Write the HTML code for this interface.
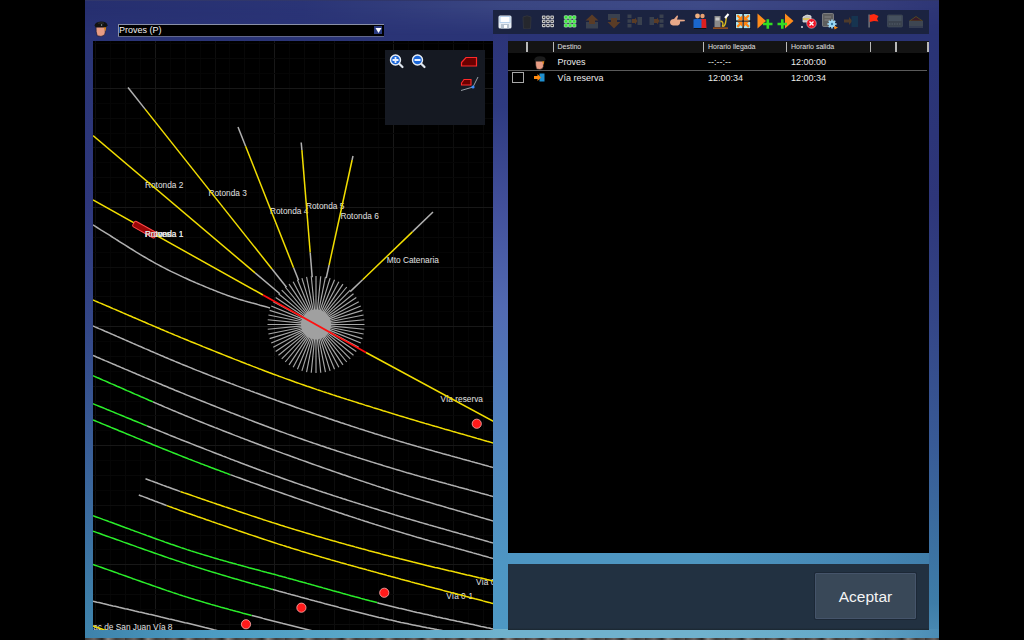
<!DOCTYPE html>
<html><head><meta charset="utf-8"><style>
*{margin:0;padding:0;box-sizing:border-box}
html,body{width:1024px;height:640px;overflow:hidden;background:#000;font-family:"Liberation Sans",sans-serif}
.abs{position:absolute}
#panel{position:absolute;left:85px;top:0;width:854px;height:638px;
background:linear-gradient(to bottom,#373c5f 0px,#2a3276 1px,#2a3576 63px,#2e377c 203px,#334687 323px,#395d97 443px,#3e7fa9 603px,#4084ac 638px)}
#pright{position:absolute;left:929px;top:0;width:10px;height:638px;
background:linear-gradient(to bottom,#373c5f 0px,#2a3276 1px,#2a3476 63px,#2e367a 203px,#344687 323px,#385a96 443px,#3e7da8 603px,#4b8cb4 638px)}
#pmid{position:absolute;left:493px;top:34px;width:15px;height:604px;
background:linear-gradient(to bottom,#2c3478 0px,#2e3a80 73px,#42509b 173px,#526ab2 273px,#507ab9 353px,#5087be 423px,#4e96c3 528px,#4e98c4 595px,#70b2cd 604px)}
#pgap{position:absolute;left:508px;top:552px;width:421px;height:12px;
background:linear-gradient(to right,#4e96c3 0px,#4e96c0 195px,#4484b2 375px,#407eaa 421px)}
#pbot{position:absolute;left:85px;top:629px;width:854px;height:9px;
background:linear-gradient(to right,#3e82aa 0px,#4b9bc3 118px,#5aa8c8 278px,#70b2cd 418px,#70b2cd 618px,#64a8c8 768px,#4b8cb4 854px)}
#ptop{position:absolute;left:85px;top:1px;width:854px;height:40px;
background:linear-gradient(to right,#262f6f 0px,#2a3476 218px,#3a4682 418px,#3e4a87 618px,#343c7a 798px,#2e3676 854px);
-webkit-mask-image:linear-gradient(to bottom,#000 0px,#000 6px,transparent 34px);mask-image:linear-gradient(to bottom,#000 0px,#000 6px,transparent 34px)}
#tex{position:absolute;left:85px;top:637.8px;width:854px;height:3px;background:repeating-linear-gradient(to right,#3a3634 0px,#6a6462 9px,#2a2624 17px,#8a8480 23px,#403c3a 31px,#5a5552 40px)}
.map{position:absolute;left:93px;top:41px}
#dd{position:absolute;left:117.5px;top:24px;width:266.7px;height:12.5px;background:#000;border:1px solid #8a90a8;border-bottom-color:#62688c;border-right:none}
#dd span{position:absolute;left:0.5px;top:0.3px;font-size:9px;line-height:11px;color:#f2f2f2}
#ddb{position:absolute;left:373.5px;top:26px;width:8.5px;height:8px;background:#2a3a80}
#tool{position:absolute;left:493px;top:10px;width:436px;height:24px;background:#1b2340}
#table{position:absolute;left:508px;top:41px;width:421px;height:511.5px;background:#000}
#thead{position:absolute;left:0;top:0;width:421px;height:11.5px;background:#141414}
.sep{position:absolute;top:1px;width:1.6px;height:10px;background:#b8b8b8}
.th{position:absolute;top:0;font-size:7px;line-height:11.5px;color:#e0e0e0}
.td{position:absolute;font-size:9px;line-height:11px;color:#ececec}
#rowsep{position:absolute;left:0;top:29px;width:419px;height:1px;background:#5a5a5a}
#chk{position:absolute;left:4px;top:31px;width:12px;height:10.5px;border:1px solid #a8a8a8}
#bottom{position:absolute;left:508px;top:563.5px;width:421px;height:66px;background:linear-gradient(to bottom,#223141 0,#223141 64px,#1a2630 66px)}
#btn{position:absolute;left:815px;top:573px;width:101px;height:46px;background:#394858;border:1px solid #45546a;color:#f4f4f4;font-size:15.5px;text-align:center;line-height:46px;border-radius:1px;box-shadow:0 0 0 1px #1c2836}
</style></head><body>
<div id="panel"></div><div id="pright"></div><div id="pmid"></div><div id="pgap"></div><div id="pbot"></div><div id="ptop"></div>
<div id="tex"></div>
<svg class="abs" style="left:93px;top:20px" width="16" height="18" viewBox="0 0 16 18"><path d="M3 7 L12.3 7 L12.2 13 Q11.5 16.2 8 16.4 L4.2 15.8 Q2.8 12 3 7Z" fill="#e89c84" stroke="#1a1830" stroke-width="0.7"/><path d="M10.3 7 L13.2 7 L12.6 11.5 Q11.5 9 10.3 7Z" fill="#d8841c"/><path d="M1.6 5.6 Q1.8 1.8 8 1.4 Q14.2 1.4 14.5 5.2 L13.2 7.3 L2.6 7.3 Z" fill="#121212"/><path d="M5 3.2 Q8 2.6 11 3.2" stroke="#4a4a3a" stroke-width="0.6" fill="none"/><circle cx="8.6" cy="5" r="0.7" fill="#9aa"/></svg>
<div id="dd"><span>Proves (P)</span></div>
<div id="ddb"></div>
<svg class="abs" style="left:374px;top:26px" width="9" height="8" viewBox="0 0 9 8"><path d="M1.5 2 L7.5 2 L4.5 7Z" fill="#ffffff"/></svg>
<svg class="map" width="400" height="589" viewBox="93 41 400 589"><rect x="93" y="41" width="400" height="589" fill="#000"/><line x1="95.50" y1="41" x2="95.50" y2="630" stroke="#0d0d0d" stroke-width="1"/><line x1="110.50" y1="41" x2="110.50" y2="630" stroke="#050505" stroke-width="1"/><line x1="125.50" y1="41" x2="125.50" y2="630" stroke="#080808" stroke-width="1"/><line x1="140.50" y1="41" x2="140.50" y2="630" stroke="#050505" stroke-width="1"/><line x1="155.50" y1="41" x2="155.50" y2="630" stroke="#181818" stroke-width="1"/><line x1="170.50" y1="41" x2="170.50" y2="630" stroke="#050505" stroke-width="1"/><line x1="185.50" y1="41" x2="185.50" y2="630" stroke="#080808" stroke-width="1"/><line x1="200.50" y1="41" x2="200.50" y2="630" stroke="#050505" stroke-width="1"/><line x1="215.50" y1="41" x2="215.50" y2="630" stroke="#0d0d0d" stroke-width="1"/><line x1="229.50" y1="41" x2="229.50" y2="630" stroke="#050505" stroke-width="1"/><line x1="244.50" y1="41" x2="244.50" y2="630" stroke="#080808" stroke-width="1"/><line x1="259.50" y1="41" x2="259.50" y2="630" stroke="#050505" stroke-width="1"/><line x1="274.50" y1="41" x2="274.50" y2="630" stroke="#181818" stroke-width="1"/><line x1="289.50" y1="41" x2="289.50" y2="630" stroke="#050505" stroke-width="1"/><line x1="304.50" y1="41" x2="304.50" y2="630" stroke="#080808" stroke-width="1"/><line x1="319.50" y1="41" x2="319.50" y2="630" stroke="#050505" stroke-width="1"/><line x1="334.50" y1="41" x2="334.50" y2="630" stroke="#0d0d0d" stroke-width="1"/><line x1="349.50" y1="41" x2="349.50" y2="630" stroke="#050505" stroke-width="1"/><line x1="363.50" y1="41" x2="363.50" y2="630" stroke="#080808" stroke-width="1"/><line x1="378.50" y1="41" x2="378.50" y2="630" stroke="#050505" stroke-width="1"/><line x1="393.50" y1="41" x2="393.50" y2="630" stroke="#181818" stroke-width="1"/><line x1="408.50" y1="41" x2="408.50" y2="630" stroke="#050505" stroke-width="1"/><line x1="423.50" y1="41" x2="423.50" y2="630" stroke="#080808" stroke-width="1"/><line x1="438.50" y1="41" x2="438.50" y2="630" stroke="#050505" stroke-width="1"/><line x1="453.50" y1="41" x2="453.50" y2="630" stroke="#0d0d0d" stroke-width="1"/><line x1="468.50" y1="41" x2="468.50" y2="630" stroke="#050505" stroke-width="1"/><line x1="483.50" y1="41" x2="483.50" y2="630" stroke="#080808" stroke-width="1"/><line x1="93" y1="43.50" x2="493" y2="43.50" stroke="#050505" stroke-width="1"/><line x1="93" y1="58.50" x2="493" y2="58.50" stroke="#080808" stroke-width="1"/><line x1="93" y1="73.50" x2="493" y2="73.50" stroke="#050505" stroke-width="1"/><line x1="93" y1="88.50" x2="493" y2="88.50" stroke="#181818" stroke-width="1"/><line x1="93" y1="103.50" x2="493" y2="103.50" stroke="#050505" stroke-width="1"/><line x1="93" y1="118.50" x2="493" y2="118.50" stroke="#080808" stroke-width="1"/><line x1="93" y1="133.50" x2="493" y2="133.50" stroke="#050505" stroke-width="1"/><line x1="93" y1="147.50" x2="493" y2="147.50" stroke="#0d0d0d" stroke-width="1"/><line x1="93" y1="162.50" x2="493" y2="162.50" stroke="#050505" stroke-width="1"/><line x1="93" y1="177.50" x2="493" y2="177.50" stroke="#080808" stroke-width="1"/><line x1="93" y1="192.50" x2="493" y2="192.50" stroke="#050505" stroke-width="1"/><line x1="93" y1="207.50" x2="493" y2="207.50" stroke="#181818" stroke-width="1"/><line x1="93" y1="222.50" x2="493" y2="222.50" stroke="#050505" stroke-width="1"/><line x1="93" y1="237.50" x2="493" y2="237.50" stroke="#080808" stroke-width="1"/><line x1="93" y1="252.50" x2="493" y2="252.50" stroke="#050505" stroke-width="1"/><line x1="93" y1="267.50" x2="493" y2="267.50" stroke="#0d0d0d" stroke-width="1"/><line x1="93" y1="281.50" x2="493" y2="281.50" stroke="#050505" stroke-width="1"/><line x1="93" y1="296.50" x2="493" y2="296.50" stroke="#080808" stroke-width="1"/><line x1="93" y1="311.50" x2="493" y2="311.50" stroke="#050505" stroke-width="1"/><line x1="93" y1="326.50" x2="493" y2="326.50" stroke="#181818" stroke-width="1"/><line x1="93" y1="341.50" x2="493" y2="341.50" stroke="#050505" stroke-width="1"/><line x1="93" y1="356.50" x2="493" y2="356.50" stroke="#080808" stroke-width="1"/><line x1="93" y1="371.50" x2="493" y2="371.50" stroke="#050505" stroke-width="1"/><line x1="93" y1="386.50" x2="493" y2="386.50" stroke="#0d0d0d" stroke-width="1"/><line x1="93" y1="401.50" x2="493" y2="401.50" stroke="#050505" stroke-width="1"/><line x1="93" y1="415.50" x2="493" y2="415.50" stroke="#080808" stroke-width="1"/><line x1="93" y1="430.50" x2="493" y2="430.50" stroke="#050505" stroke-width="1"/><line x1="93" y1="445.50" x2="493" y2="445.50" stroke="#181818" stroke-width="1"/><line x1="93" y1="460.50" x2="493" y2="460.50" stroke="#050505" stroke-width="1"/><line x1="93" y1="475.50" x2="493" y2="475.50" stroke="#080808" stroke-width="1"/><line x1="93" y1="490.50" x2="493" y2="490.50" stroke="#050505" stroke-width="1"/><line x1="93" y1="505.50" x2="493" y2="505.50" stroke="#0d0d0d" stroke-width="1"/><line x1="93" y1="520.50" x2="493" y2="520.50" stroke="#050505" stroke-width="1"/><line x1="93" y1="535.50" x2="493" y2="535.50" stroke="#080808" stroke-width="1"/><line x1="93" y1="549.50" x2="493" y2="549.50" stroke="#050505" stroke-width="1"/><line x1="93" y1="564.50" x2="493" y2="564.50" stroke="#181818" stroke-width="1"/><line x1="93" y1="579.50" x2="493" y2="579.50" stroke="#050505" stroke-width="1"/><line x1="93" y1="594.50" x2="493" y2="594.50" stroke="#080808" stroke-width="1"/><line x1="93" y1="609.50" x2="493" y2="609.50" stroke="#050505" stroke-width="1"/><line x1="93" y1="624.50" x2="493" y2="624.50" stroke="#0d0d0d" stroke-width="1"/><g font-family="Liberation Sans, sans-serif" font-size="8.3" fill="#e2e2e2"><text x="145" y="187.5">Rotonda 2</text><text x="208.5" y="196.0">Rotonda 3</text><text x="270" y="213.5">Rotonda 4</text><text x="306" y="208.5">Rotonda 5</text><text x="340.5" y="219.0">Rotonda 6</text><text x="386.75" y="263.0">Mto Catenaria</text><text x="145" y="236.5">Rotonda 1</text><text x="145" y="236.5">Proves</text><text x="440.5" y="401.8">Vía reserva</text><text x="476" y="585.4">Vía 0</text><text x="446.3" y="598.6">Vía 0-1</text><text x="172.5" y="629.7" text-anchor="end">Trac de San Juan Vía 8</text></g><line x1="128.0" y1="87.5" x2="145.1" y2="109.1" stroke="#b0b0b0" stroke-width="1.5"/><line x1="145.1" y1="109.1" x2="272.0" y2="269.0" stroke="#f2de00" stroke-width="1.5"/><line x1="272.0" y1="269.0" x2="286.5" y2="287.3" stroke="#b0b0b0" stroke-width="1.5"/><line x1="93.0" y1="135.5" x2="255.1" y2="272.9" stroke="#f2de00" stroke-width="1.5"/><line x1="255.1" y1="272.9" x2="279.8" y2="293.8" stroke="#b0b0b0" stroke-width="1.5"/><line x1="238.0" y1="127.0" x2="245.6" y2="146.2" stroke="#b0b0b0" stroke-width="1.5"/><line x1="245.6" y1="146.2" x2="293.6" y2="267.7" stroke="#f2de00" stroke-width="1.5"/><line x1="293.6" y1="267.7" x2="298.6" y2="280.3" stroke="#b0b0b0" stroke-width="1.5"/><line x1="301.2" y1="142.5" x2="301.9" y2="150.1" stroke="#b0b0b0" stroke-width="1.5"/><line x1="301.9" y1="150.1" x2="310.2" y2="252.5" stroke="#f2de00" stroke-width="1.5"/><line x1="310.2" y1="252.5" x2="312.2" y2="277.2" stroke="#b0b0b0" stroke-width="1.5"/><line x1="353.0" y1="156.0" x2="352.1" y2="160.0" stroke="#b0b0b0" stroke-width="1.5"/><line x1="352.1" y1="160.0" x2="329.1" y2="265.0" stroke="#f2de00" stroke-width="1.5"/><line x1="329.1" y1="265.0" x2="326.2" y2="278.1" stroke="#b0b0b0" stroke-width="1.5"/><line x1="433.0" y1="212.0" x2="412.4" y2="231.9" stroke="#b0b0b0" stroke-width="1.5"/><line x1="412.4" y1="231.9" x2="362.6" y2="279.7" stroke="#f2de00" stroke-width="1.5"/><line x1="362.6" y1="279.7" x2="350.2" y2="291.6" stroke="#b0b0b0" stroke-width="1.5"/><line x1="93" y1="200" x2="263" y2="295" stroke="#f2de00" stroke-width="1.5"/><line x1="366" y1="352.5" x2="495" y2="422.3" stroke="#f2de00" stroke-width="1.5"/><polyline points="93.0,225.0 95.0,226.2 97.1,227.5 99.2,228.8 101.2,230.1 103.3,231.3 105.3,232.6 107.4,233.9 109.5,235.2 111.5,236.5 113.6,237.8 115.7,239.2 117.8,240.5 119.8,241.8 121.9,243.1 124.0,244.4 126.0,245.7 128.1,247.0 130.2,248.3 132.2,249.5 134.3,250.8 136.3,252.1 138.4,253.3 140.4,254.6 142.5,255.8 144.5,257.0 146.5,258.2 148.5,259.4 150.5,260.5 152.6,261.7 154.6,262.8 156.5,263.9 158.5,264.9 160.5,266.0 162.6,267.1 164.7,268.2 166.8,269.3 168.9,270.3 171.0,271.4 173.1,272.4 175.3,273.4 177.4,274.4 179.5,275.4 181.6,276.4 183.7,277.4 185.8,278.3 187.9,279.3 189.9,280.2 192.0,281.1 194.1,282.0 196.1,282.9 198.1,283.7 200.2,284.6 202.2,285.4 204.2,286.3 206.1,287.1 208.1,287.9 210.0,288.7 212.0,289.4 213.9,290.2 215.7,290.9 217.6,291.7 219.4,292.4 221.2,293.1 223.0,293.8 225.4,294.6 227.6,295.5 229.9,296.3 232.1,297.0 234.2,297.7 236.4,298.4 238.4,299.1 240.5,299.7 242.5,300.3 244.5,300.9 246.5,301.4 248.4,302.0 250.4,302.5 252.3,303.1 254.3,303.6 256.2,304.1 258.1,304.6 260.1,305.2 262.0,305.7 264.0,306.2 266.0,306.8 268.0,307.4 270.0,308.0" fill="none" stroke="#b0b0b0" stroke-width="1.5"/><g stroke="#a8a8a8" stroke-width="1.15"><line x1="330.00" y1="324.50" x2="364.50" y2="324.50"/><line x1="329.93" y1="325.87" x2="364.27" y2="329.25"/><line x1="329.73" y1="327.23" x2="363.57" y2="333.96"/><line x1="329.40" y1="328.56" x2="362.41" y2="338.58"/><line x1="328.93" y1="329.86" x2="360.81" y2="343.06"/><line x1="328.35" y1="331.10" x2="358.77" y2="347.36"/><line x1="327.64" y1="332.28" x2="356.33" y2="351.45"/><line x1="326.82" y1="333.38" x2="353.49" y2="355.27"/><line x1="325.90" y1="334.40" x2="350.29" y2="358.79"/><line x1="324.88" y1="335.32" x2="346.77" y2="361.99"/><line x1="323.78" y1="336.14" x2="342.95" y2="364.83"/><line x1="322.60" y1="336.85" x2="338.86" y2="367.27"/><line x1="321.36" y1="337.43" x2="334.56" y2="369.31"/><line x1="320.06" y1="337.90" x2="330.08" y2="370.91"/><line x1="318.73" y1="338.23" x2="325.46" y2="372.07"/><line x1="317.37" y1="338.43" x2="320.75" y2="372.77"/><line x1="316.00" y1="338.50" x2="316.00" y2="373.00"/><line x1="314.63" y1="338.43" x2="311.25" y2="372.77"/><line x1="313.27" y1="338.23" x2="306.54" y2="372.07"/><line x1="311.94" y1="337.90" x2="301.92" y2="370.91"/><line x1="310.64" y1="337.43" x2="297.44" y2="369.31"/><line x1="309.40" y1="336.85" x2="293.14" y2="367.27"/><line x1="308.22" y1="336.14" x2="289.05" y2="364.83"/><line x1="307.12" y1="335.32" x2="285.23" y2="361.99"/><line x1="306.10" y1="334.40" x2="281.71" y2="358.79"/><line x1="305.18" y1="333.38" x2="278.51" y2="355.27"/><line x1="304.36" y1="332.28" x2="275.67" y2="351.45"/><line x1="303.65" y1="331.10" x2="273.23" y2="347.36"/><line x1="303.07" y1="329.86" x2="271.19" y2="343.06"/><line x1="302.60" y1="328.56" x2="269.59" y2="338.58"/><line x1="302.27" y1="327.23" x2="268.43" y2="333.96"/><line x1="302.07" y1="325.87" x2="267.73" y2="329.25"/><line x1="302.00" y1="324.50" x2="267.50" y2="324.50"/><line x1="302.07" y1="323.13" x2="267.73" y2="319.75"/><line x1="302.27" y1="321.77" x2="268.43" y2="315.04"/><line x1="302.60" y1="320.44" x2="269.59" y2="310.42"/><line x1="303.07" y1="319.14" x2="271.19" y2="305.94"/><line x1="303.65" y1="317.90" x2="273.23" y2="301.64"/><line x1="304.36" y1="316.72" x2="275.67" y2="297.55"/><line x1="305.18" y1="315.62" x2="278.51" y2="293.73"/><line x1="306.10" y1="314.60" x2="281.71" y2="290.21"/><line x1="307.12" y1="313.68" x2="285.23" y2="287.01"/><line x1="308.22" y1="312.86" x2="289.05" y2="284.17"/><line x1="309.40" y1="312.15" x2="293.14" y2="281.73"/><line x1="310.64" y1="311.57" x2="297.44" y2="279.69"/><line x1="311.94" y1="311.10" x2="301.92" y2="278.09"/><line x1="313.27" y1="310.77" x2="306.54" y2="276.93"/><line x1="314.63" y1="310.57" x2="311.25" y2="276.23"/><line x1="316.00" y1="310.50" x2="316.00" y2="276.00"/><line x1="317.37" y1="310.57" x2="320.75" y2="276.23"/><line x1="318.73" y1="310.77" x2="325.46" y2="276.93"/><line x1="320.06" y1="311.10" x2="330.08" y2="278.09"/><line x1="321.36" y1="311.57" x2="334.56" y2="279.69"/><line x1="322.60" y1="312.15" x2="338.86" y2="281.73"/><line x1="323.78" y1="312.86" x2="342.95" y2="284.17"/><line x1="324.88" y1="313.68" x2="346.77" y2="287.01"/><line x1="325.90" y1="314.60" x2="350.29" y2="290.21"/><line x1="326.82" y1="315.62" x2="353.49" y2="293.73"/><line x1="327.64" y1="316.72" x2="356.33" y2="297.55"/><line x1="328.35" y1="317.90" x2="358.77" y2="301.64"/><line x1="328.93" y1="319.14" x2="360.81" y2="305.94"/><line x1="329.40" y1="320.44" x2="362.41" y2="310.42"/><line x1="329.73" y1="321.77" x2="363.57" y2="315.04"/><line x1="329.93" y1="323.13" x2="364.27" y2="319.75"/></g><circle cx="316.0" cy="324.5" r="15" fill="#a0a0a0"/><line x1="263" y1="295" x2="366" y2="352.5" stroke="#ff1010" stroke-width="2"/><polyline points="93.0,300.0 95.0,300.9 97.0,301.7 99.0,302.6 101.0,303.4 103.0,304.3 105.0,305.1 107.0,306.0 109.0,306.8 111.0,307.7 113.0,308.6 115.0,309.4 117.0,310.3 119.0,311.1 121.0,312.0 123.0,312.9 125.0,313.7 127.0,314.6 129.0,315.5 131.0,316.3 133.0,317.2 135.0,318.0 137.0,318.9 139.0,319.8 141.0,320.6 143.0,321.5 145.0,322.3 147.0,323.2 149.0,324.1 151.0,324.9 153.0,325.8 155.0,326.6 157.0,327.5 159.0,328.3 161.0,329.2 163.0,330.0 165.0,330.9 167.0,331.7 169.0,332.6 171.0,333.4 173.0,334.2 175.0,335.1 177.0,335.9 179.0,336.7 181.0,337.6 183.0,338.4 185.0,339.2 187.0,340.0 189.0,340.9 191.0,341.7 193.0,342.5 195.0,343.3 197.0,344.1 199.0,344.9 201.0,345.7 203.0,346.6 205.0,347.4 207.0,348.2 209.0,349.0 211.0,349.8 213.0,350.6 215.0,351.4 217.0,352.2 219.0,353.0 221.0,353.8 223.0,354.6 225.0,355.4 227.0,356.2 229.0,357.0 231.0,357.8 233.0,358.6 235.0,359.4 237.0,360.1 239.0,360.9 241.0,361.7 243.0,362.5 245.0,363.3 247.0,364.1 249.0,364.8 251.0,365.6 253.0,366.4 255.0,367.1 257.0,367.9 259.0,368.7 261.0,369.4 263.0,370.2 265.0,371.0 267.0,371.7 269.0,372.5 271.0,373.2 273.0,374.0 275.0,374.7 277.0,375.4 279.0,376.2 281.0,376.9 283.0,377.6 285.0,378.4 287.0,379.1 289.0,379.8 291.0,380.5 293.0,381.2 295.0,382.0 297.0,382.7 299.0,383.4 301.0,384.1 303.0,384.8 305.0,385.5 307.0,386.2 309.0,386.8 311.0,387.5 313.0,388.2 315.0,388.9 317.0,389.6 319.0,390.2 321.0,390.9 323.0,391.6 325.0,392.2 327.0,392.9 329.0,393.5 331.0,394.2 333.0,394.9 335.0,395.5 337.0,396.2 339.0,396.8 341.0,397.5 343.0,398.1 345.0,398.7 347.0,399.4 349.0,400.0 351.0,400.6 353.0,401.3 355.0,401.9 357.0,402.5 359.0,403.2 361.0,403.8 363.0,404.4 365.0,405.1 367.0,405.7 369.0,406.3 371.0,406.9 373.0,407.6 375.0,408.2 377.0,408.8 379.0,409.4 381.0,410.0 383.0,410.7 385.0,411.3 387.0,411.9 389.0,412.5 391.0,413.1 393.0,413.8 395.0,414.4 397.0,415.0 399.0,415.6 401.0,416.2 403.0,416.8 405.0,417.4 407.0,418.0 409.0,418.6 411.0,419.2 413.0,419.8 415.0,420.4 417.0,421.0 419.0,421.6 421.0,422.2 423.0,422.8 425.0,423.4 427.0,423.9 429.0,424.5 431.0,425.1 433.0,425.7 435.0,426.3 437.0,426.8 439.0,427.4 441.0,428.0 443.0,428.6 445.0,429.2 447.0,429.7 449.0,430.3 451.0,430.9 453.0,431.5 455.0,432.0 457.0,432.6 459.0,433.2 461.0,433.8 463.0,434.3 465.0,434.9 467.0,435.5 469.0,436.1 471.0,436.6 473.0,437.2 475.0,437.8 477.0,438.4 479.0,438.9 481.0,439.5 483.0,440.1 485.0,440.7 487.0,441.3 489.0,441.8 491.0,442.4 493.0,443.0" fill="none" stroke="#f2de00" stroke-width="1.5"/><polyline points="93.0,326.0 95.0,326.9 97.0,327.7 99.0,328.6 101.0,329.4 103.0,330.3 105.0,331.2 107.0,332.0 109.0,332.9 111.0,333.8 113.0,334.6 115.0,335.5 117.0,336.4 119.0,337.2 121.0,338.1 123.0,339.0 125.0,339.9 127.0,340.7 129.0,341.6 131.0,342.5 133.0,343.4 135.0,344.2 137.0,345.1 139.0,346.0 141.0,346.8 143.0,347.7 145.0,348.6 147.0,349.4 149.0,350.3 151.0,351.2 153.0,352.0 155.0,352.9 157.0,353.7 159.0,354.6 161.0,355.5 163.0,356.3 165.0,357.2 167.0,358.0 169.0,358.9 171.0,359.7 173.0,360.5 175.0,361.4 177.0,362.2 179.0,363.0 181.0,363.9 183.0,364.7 185.0,365.5 187.0,366.3 189.0,367.1 191.0,367.9 193.0,368.8 195.0,369.6 197.0,370.4 199.0,371.1 201.0,371.9 203.0,372.7 205.0,373.5 207.0,374.3 209.0,375.1 211.0,375.9 213.0,376.7 215.0,377.4 217.0,378.2 219.0,379.0 221.0,379.8 223.0,380.5 225.0,381.3 227.0,382.1 229.0,382.8 231.0,383.6 233.0,384.3 235.0,385.1 237.0,385.9 239.0,386.6 241.0,387.4 243.0,388.1 245.0,388.9 247.0,389.6 249.0,390.3 251.0,391.1 253.0,391.8 255.0,392.6 257.0,393.3 259.0,394.0 261.0,394.8 263.0,395.5 265.0,396.2 267.0,397.0 269.0,397.7 271.0,398.4 273.0,399.1 275.0,399.8 277.0,400.6 279.0,401.3 281.0,402.0 283.0,402.7 285.0,403.4 287.0,404.1 289.0,404.8 291.0,405.5 293.0,406.2 295.0,407.0 297.0,407.7 299.0,408.4 301.0,409.1 303.0,409.8 305.0,410.4 307.0,411.1 309.0,411.8 311.0,412.5 313.0,413.2 315.0,413.9 317.0,414.6 319.0,415.3 321.0,416.0 323.0,416.6 325.0,417.3 327.0,418.0 329.0,418.7 331.0,419.3 333.0,420.0 335.0,420.7 337.0,421.3 339.0,422.0 341.0,422.7 343.0,423.3 345.0,424.0 347.0,424.6 349.0,425.3 351.0,426.0 353.0,426.6 355.0,427.3 357.0,427.9 359.0,428.6 361.0,429.2 363.0,429.8 365.0,430.5 367.0,431.1 369.0,431.8 371.0,432.4 373.0,433.0 375.0,433.7 377.0,434.3 379.0,434.9 381.0,435.5 383.0,436.2 385.0,436.8 387.0,437.4 389.0,438.0 391.0,438.6 393.0,439.2 395.0,439.9 397.0,440.5 399.0,441.1 401.0,441.7 403.0,442.3 405.0,442.9 407.0,443.5 409.0,444.0 411.0,444.6 413.0,445.2 415.0,445.8 417.0,446.4 419.0,446.9 421.0,447.5 423.0,448.1 425.0,448.6 427.0,449.2 429.0,449.8 431.0,450.3 433.0,450.9 435.0,451.5 437.0,452.0 439.0,452.6 441.0,453.1 443.0,453.7 445.0,454.2 447.0,454.8 449.0,455.3 451.0,455.9 453.0,456.4 455.0,457.0 457.0,457.5 459.0,458.1 461.0,458.6 463.0,459.2 465.0,459.7 467.0,460.3 469.0,460.8 471.0,461.4 473.0,461.9 475.0,462.5 477.0,463.0 479.0,463.6 481.0,464.1 483.0,464.7 485.0,465.3 487.0,465.8 489.0,466.4 491.0,466.9 493.0,467.5" fill="none" stroke="#b0b0b0" stroke-width="1.5"/><polyline points="93.0,355.5 95.0,356.3 97.0,357.2 99.0,358.0 101.0,358.9 103.0,359.7 105.0,360.6 107.0,361.4 109.0,362.3 111.0,363.1 113.0,364.0 115.0,364.8 117.0,365.7 119.0,366.5 121.0,367.4 123.0,368.2 125.0,369.1 127.0,369.9 129.0,370.8 131.0,371.6 133.0,372.5 135.0,373.3 137.0,374.2 139.0,375.0 141.0,375.9 143.0,376.7 145.0,377.6 147.0,378.4 149.0,379.3 151.0,380.1 153.0,381.0 155.0,381.8 157.0,382.6 159.0,383.5 161.0,384.3 163.0,385.2 165.0,386.0 167.0,386.8 169.0,387.7 171.0,388.5 173.0,389.3 175.0,390.2 177.0,391.0 179.0,391.8 181.0,392.6 183.0,393.4 185.0,394.3 187.0,395.1 189.0,395.9 191.0,396.7 193.0,397.5 195.0,398.3 197.0,399.1 199.0,399.9 201.0,400.7 203.0,401.5 205.0,402.3 207.0,403.1 209.0,403.9 211.0,404.7 213.0,405.5 215.0,406.3 217.0,407.1 219.0,407.9 221.0,408.7 223.0,409.5 225.0,410.3 227.0,411.1 229.0,411.9 231.0,412.7 233.0,413.4 235.0,414.2 237.0,415.0 239.0,415.8 241.0,416.6 243.0,417.3 245.0,418.1 247.0,418.9 249.0,419.7 251.0,420.4 253.0,421.2 255.0,422.0 257.0,422.7 259.0,423.5 261.0,424.2 263.0,425.0 265.0,425.8 267.0,426.5 269.0,427.3 271.0,428.0 273.0,428.7 275.0,429.5 277.0,430.2 279.0,431.0 281.0,431.7 283.0,432.4 285.0,433.1 287.0,433.9 289.0,434.6 291.0,435.3 293.0,436.0 295.0,436.7 297.0,437.4 299.0,438.1 301.0,438.8 303.0,439.5 305.0,440.2 307.0,440.9 309.0,441.6 311.0,442.3 313.0,443.0 315.0,443.6 317.0,444.3 319.0,445.0 321.0,445.7 323.0,446.3 325.0,447.0 327.0,447.7 329.0,448.3 331.0,449.0 333.0,449.6 335.0,450.3 337.0,451.0 339.0,451.6 341.0,452.3 343.0,452.9 345.0,453.6 347.0,454.2 349.0,454.8 351.0,455.5 353.0,456.1 355.0,456.7 357.0,457.4 359.0,458.0 361.0,458.6 363.0,459.3 365.0,459.9 367.0,460.5 369.0,461.1 371.0,461.8 373.0,462.4 375.0,463.0 377.0,463.6 379.0,464.2 381.0,464.8 383.0,465.5 385.0,466.1 387.0,466.7 389.0,467.3 391.0,467.9 393.0,468.5 395.0,469.1 397.0,469.7 399.0,470.3 401.0,470.9 403.0,471.5 405.0,472.1 407.0,472.7 409.0,473.2 411.0,473.8 413.0,474.4 415.0,475.0 417.0,475.5 419.0,476.1 421.0,476.7 423.0,477.2 425.0,477.8 427.0,478.4 429.0,478.9 431.0,479.5 433.0,480.0 435.0,480.6 437.0,481.1 439.0,481.7 441.0,482.2 443.0,482.8 445.0,483.3 447.0,483.9 449.0,484.4 451.0,485.0 453.0,485.5 455.0,486.1 457.0,486.6 459.0,487.2 461.0,487.7 463.0,488.2 465.0,488.8 467.0,489.3 469.0,489.9 471.0,490.4 473.0,491.0 475.0,491.5 477.0,492.1 479.0,492.6 481.0,493.2 483.0,493.7 485.0,494.3 487.0,494.8 489.0,495.4 491.0,495.9 493.0,496.5" fill="none" stroke="#b0b0b0" stroke-width="1.5"/><polyline points="93.0,375.8 95.0,376.6 97.0,377.5 99.0,378.3 101.0,379.2 103.0,380.1 105.0,380.9 107.0,381.8 109.0,382.7 111.0,383.6 113.0,384.4 115.0,385.3 117.0,386.2 119.0,387.0 121.0,387.9 123.0,388.8 125.0,389.7 127.0,390.6 129.0,391.4 131.0,392.3 133.0,393.2 135.0,394.1 137.0,394.9 139.0,395.8 141.0,396.7 143.0,397.5 145.0,398.4 147.0,399.3 149.0,400.2 151.0,401.0 153.0,401.9" fill="none" stroke="#2aee2a" stroke-width="1.5"/><polyline points="153.0,401.9 155.0,402.8 157.0,403.6 159.0,404.5 161.0,405.3 163.0,406.2 165.0,407.1 167.0,407.9 169.0,408.8 171.0,409.6 173.0,410.5 175.0,411.3 177.0,412.1 179.0,413.0 181.0,413.8 183.0,414.6 185.0,415.5 187.0,416.3 189.0,417.1 191.0,417.9 193.0,418.8 195.0,419.6 197.0,420.4 199.0,421.2 201.0,422.0 203.0,422.8 205.0,423.6 207.0,424.4 209.0,425.2 211.0,426.0 213.0,426.8 215.0,427.6 217.0,428.3 219.0,429.1 221.0,429.9 223.0,430.7 225.0,431.5 227.0,432.3 229.0,433.0 231.0,433.8 233.0,434.6 235.0,435.4 237.0,436.1 239.0,436.9 241.0,437.7 243.0,438.4 245.0,439.2 247.0,439.9 249.0,440.7 251.0,441.5 253.0,442.2 255.0,443.0 257.0,443.7 259.0,444.5 261.0,445.2 263.0,446.0 265.0,446.7 267.0,447.5 269.0,448.2 271.0,448.9 273.0,449.7 275.0,450.4 277.0,451.2 279.0,451.9 281.0,452.6 283.0,453.4 285.0,454.1 287.0,454.8 289.0,455.5 291.0,456.3 293.0,457.0 295.0,457.7 297.0,458.4 299.0,459.2 301.0,459.9 303.0,460.6 305.0,461.3 307.0,462.0 309.0,462.8 311.0,463.5 313.0,464.2 315.0,464.9 317.0,465.6 319.0,466.3 321.0,467.0 323.0,467.7 325.0,468.4 327.0,469.1 329.0,469.8 331.0,470.5 333.0,471.2 335.0,471.9 337.0,472.6 339.0,473.3 341.0,474.0 343.0,474.7 345.0,475.3 347.0,476.0 349.0,476.7 351.0,477.4 353.0,478.1 355.0,478.7 357.0,479.4 359.0,480.1 361.0,480.8 363.0,481.4 365.0,482.1 367.0,482.8 369.0,483.4 371.0,484.1 373.0,484.8 375.0,485.4 377.0,486.1 379.0,486.7 381.0,487.4 383.0,488.0 385.0,488.7 387.0,489.3 389.0,490.0 391.0,490.6 393.0,491.2 395.0,491.9 397.0,492.5 399.0,493.2 401.0,493.8 403.0,494.4 405.0,495.0 407.0,495.6 409.0,496.3 411.0,496.9 413.0,497.5 415.0,498.1 417.0,498.7 419.0,499.3 421.0,499.9 423.0,500.5 425.0,501.1 427.0,501.7 429.0,502.3 431.0,502.9 433.0,503.5 435.0,504.1 437.0,504.7 439.0,505.2 441.0,505.8 443.0,506.4 445.0,507.0 447.0,507.6 449.0,508.2 451.0,508.7 453.0,509.3 455.0,509.9 457.0,510.5 459.0,511.1 461.0,511.6 463.0,512.2 465.0,512.8 467.0,513.4 469.0,514.0 471.0,514.5 473.0,515.1 475.0,515.7 477.0,516.3 479.0,516.9 481.0,517.5 483.0,518.0 485.0,518.6 487.0,519.2 489.0,519.8 491.0,520.4 493.0,521.0" fill="none" stroke="#b0b0b0" stroke-width="1.5"/><polyline points="93.0,403.8 95.0,404.6 97.0,405.4 99.0,406.2 101.0,407.0 103.0,407.8 105.0,408.6 107.0,409.5 109.0,410.3 111.0,411.1 113.0,411.9 115.0,412.8 117.0,413.6 119.0,414.4 121.0,415.2 123.0,416.0 125.0,416.9 127.0,417.7 129.0,418.5 131.0,419.3 133.0,420.2 135.0,421.0 137.0,421.8 139.0,422.6 141.0,423.4 143.0,424.3 145.0,425.1 146.8,425.8" fill="none" stroke="#2aee2a" stroke-width="1.5"/><polyline points="146.8,425.8 147.0,425.9 149.0,426.7 151.0,427.5 153.0,428.4 155.0,429.2 157.0,430.0 159.0,430.8 161.0,431.6 163.0,432.4 165.0,433.2 167.0,434.0 169.0,434.9 171.0,435.7 173.0,436.5 175.0,437.3 177.0,438.1 179.0,438.9 181.0,439.7 183.0,440.5 185.0,441.3 187.0,442.0 189.0,442.8 191.0,443.6 193.0,444.4 195.0,445.2 197.0,446.0 199.0,446.7 201.0,447.5 203.0,448.3 205.0,449.1 207.0,449.9 209.0,450.6 211.0,451.4 213.0,452.2 215.0,453.0 217.0,453.8 219.0,454.5 221.0,455.3 223.0,456.1 225.0,456.8 227.0,457.6 229.0,458.4 231.0,459.2 233.0,459.9 235.0,460.7 237.0,461.4 239.0,462.2 241.0,463.0 243.0,463.7 245.0,464.5 247.0,465.2 249.0,466.0 251.0,466.7 253.0,467.5 255.0,468.2 257.0,469.0 259.0,469.7 261.0,470.5 263.0,471.2 265.0,471.9 267.0,472.7 269.0,473.4 271.0,474.1 273.0,474.9 275.0,475.6 277.0,476.3 279.0,477.0 281.0,477.8 283.0,478.5 285.0,479.2 287.0,479.9 289.0,480.6 291.0,481.3 293.0,482.0 295.0,482.7 297.0,483.4 299.0,484.1 301.0,484.8 303.0,485.5 305.0,486.1 307.0,486.8 309.0,487.5 311.0,488.2 313.0,488.8 315.0,489.5 317.0,490.2 319.0,490.9 321.0,491.5 323.0,492.2 325.0,492.8 327.0,493.5 329.0,494.1 331.0,494.8 333.0,495.5 335.0,496.1 337.0,496.7 339.0,497.4 341.0,498.0 343.0,498.7 345.0,499.3 347.0,500.0 349.0,500.6 351.0,501.2 353.0,501.9 355.0,502.5 357.0,503.1 359.0,503.7 361.0,504.4 363.0,505.0 365.0,505.6 367.0,506.2 369.0,506.9 371.0,507.5 373.0,508.1 375.0,508.7 377.0,509.3 379.0,510.0 381.0,510.6 383.0,511.2 385.0,511.8 387.0,512.4 389.0,513.0 391.0,513.6 393.0,514.2 395.0,514.9 397.0,515.5 399.0,516.1 401.0,516.7 403.0,517.3 405.0,517.9 407.0,518.5 409.0,519.0 411.0,519.6 413.0,520.2 415.0,520.8 417.0,521.4 419.0,522.0 421.0,522.6 423.0,523.1 425.0,523.7 427.0,524.3 429.0,524.9 431.0,525.4 433.0,526.0 435.0,526.6 437.0,527.1 439.0,527.7 441.0,528.3 443.0,528.8 445.0,529.4 447.0,530.0 449.0,530.5 451.0,531.1 453.0,531.7 455.0,532.2 457.0,532.8 459.0,533.4 461.0,533.9 463.0,534.5 465.0,535.0 467.0,535.6 469.0,536.2 471.0,536.7 473.0,537.3 475.0,537.9 477.0,538.4 479.0,539.0 481.0,539.6 483.0,540.1 485.0,540.7 487.0,541.3 489.0,541.9 491.0,542.4 493.0,543.0" fill="none" stroke="#b0b0b0" stroke-width="1.5"/><polyline points="93.0,420.0 95.0,420.8 97.0,421.6 99.0,422.4 101.0,423.3 103.0,424.1 105.0,424.9 107.0,425.7 109.0,426.5 111.0,427.4 113.0,428.2 115.0,429.0 117.0,429.8 119.0,430.7 121.0,431.5 123.0,432.3 125.0,433.1 127.0,434.0 129.0,434.8 131.0,435.6 133.0,436.4 135.0,437.3 137.0,438.1 139.0,438.9 141.0,439.7 143.0,440.6 145.0,441.4 147.0,442.2 149.0,443.0 151.0,443.8 153.0,444.7 155.0,445.5 157.0,446.3 159.0,447.1 161.0,447.9 163.0,448.7 165.0,449.5 167.0,450.3 169.0,451.1 171.0,451.9 173.0,452.7 175.0,453.5 177.0,454.3 179.0,455.1 181.0,455.9 183.0,456.7 185.0,457.5 187.0,458.3 189.0,459.1 191.0,459.8 193.0,460.6 195.0,461.4 197.0,462.1 199.0,462.9 201.0,463.7 203.0,464.4 205.0,465.2 207.0,465.9 209.0,466.7 211.0,467.5 213.0,468.2 215.0,469.0 217.0,469.7 219.0,470.4 221.0,471.2 223.0,471.9 225.0,472.7 227.0,473.4 229.0,474.2 230.5,474.7" fill="none" stroke="#2aee2a" stroke-width="1.5"/><polyline points="230.5,474.7 231.0,474.9 233.0,475.6 235.0,476.4 237.0,477.1 239.0,477.8 241.0,478.5 243.0,479.3 245.0,480.0 247.0,480.7 249.0,481.4 251.0,482.2 253.0,482.9 255.0,483.6 257.0,484.3 259.0,485.0 261.0,485.7 263.0,486.5 265.0,487.2 267.0,487.9 269.0,488.6 271.0,489.3 273.0,490.0 275.0,490.7 277.0,491.4 279.0,492.1 281.0,492.8 283.0,493.5 285.0,494.2 287.0,494.9 289.0,495.6 291.0,496.3 293.0,497.0 295.0,497.7 297.0,498.4 299.0,499.1 301.0,499.8 303.0,500.5 305.0,501.1 307.0,501.8 309.0,502.5 311.0,503.2 313.0,503.9 315.0,504.6 317.0,505.3 319.0,505.9 321.0,506.6 323.0,507.3 325.0,508.0 327.0,508.6 329.0,509.3 331.0,510.0 333.0,510.7 335.0,511.3 337.0,512.0 339.0,512.7 341.0,513.3 343.0,514.0 345.0,514.7 347.0,515.3 349.0,516.0 351.0,516.6 353.0,517.3 355.0,517.9 357.0,518.6 359.0,519.2 361.0,519.9 363.0,520.5 365.0,521.2 367.0,521.8 369.0,522.5 371.0,523.1 373.0,523.7 375.0,524.4 377.0,525.0 379.0,525.6 381.0,526.3 383.0,526.9 385.0,527.5 387.0,528.1 389.0,528.8 391.0,529.4 393.0,530.0 395.0,530.6 397.0,531.2 399.0,531.8 401.0,532.4 403.0,533.0 405.0,533.6 407.0,534.2 409.0,534.8 411.0,535.4 413.0,536.0 415.0,536.6 417.0,537.2 419.0,537.7 421.0,538.3 423.0,538.9 425.0,539.5 427.0,540.0 429.0,540.6 431.0,541.2 433.0,541.7 435.0,542.3 437.0,542.9 439.0,543.4 441.0,544.0 443.0,544.5 445.0,545.1 447.0,545.6 449.0,546.2 451.0,546.8 453.0,547.3 455.0,547.9 457.0,548.4 459.0,549.0 461.0,549.5 463.0,550.1 465.0,550.6 467.0,551.2 469.0,551.8 471.0,552.3 473.0,552.9 475.0,553.4 477.0,554.0 479.0,554.5 481.0,555.1 483.0,555.7 485.0,556.2 487.0,556.8 489.0,557.4 491.0,557.9 493.0,558.5" fill="none" stroke="#b0b0b0" stroke-width="1.5"/><polyline points="145.5,478.8 147.5,479.5 149.4,480.2 151.3,480.9 153.1,481.5 154.9,482.2 156.6,482.8 158.3,483.5 160.0,484.1 161.6,484.7 163.3,485.4 165.1,486.0 166.9,486.7 168.7,487.3 170.6,488.0 172.6,488.8 174.7,489.5 176.9,490.3 179.2,491.1 180.5,491.6" fill="none" stroke="#b0b0b0" stroke-width="1.5"/><polyline points="180.5,491.6 181.6,492.0 184.2,492.9 187.0,493.8 189.9,494.8 193.0,495.9 194.5,496.4 196.0,496.9 197.6,497.5 199.2,498.0 200.9,498.6 202.6,499.2 204.3,499.8 206.0,500.4 207.8,501.0 209.6,501.6 211.5,502.2 213.4,502.9 215.3,503.5 217.2,504.2 219.1,504.8 221.1,505.5 223.1,506.2 225.1,506.9 227.2,507.5 229.2,508.2 231.3,508.9 233.4,509.6 235.5,510.3 237.6,511.1 239.7,511.8 241.9,512.5 244.0,513.2 246.2,513.9 248.3,514.6 250.5,515.4 252.6,516.1 254.8,516.8 257.0,517.5 259.2,518.2 261.3,518.9 263.5,519.7 265.7,520.4 267.9,521.1 270.0,521.8 272.2,522.5 274.3,523.1 276.4,523.8 278.6,524.5 280.7,525.2 282.8,525.8 284.8,526.5 286.9,527.1 289.0,527.8 291.0,528.4 293.0,529.0 295.0,529.6 297.0,530.2 299.0,530.8 301.0,531.4 303.0,532.0 305.0,532.6 307.0,533.2 309.0,533.8 311.0,534.4 313.0,535.0 315.0,535.6 317.0,536.2 319.0,536.7 321.0,537.3 323.0,537.9 325.0,538.5 327.0,539.1 329.0,539.6 331.0,540.2 333.0,540.8 335.0,541.3 337.0,541.9 339.0,542.5 341.0,543.0 343.0,543.6 345.0,544.1 347.0,544.7 349.0,545.2 351.0,545.8 353.0,546.3 355.0,546.9 357.0,547.4 359.0,548.0 361.0,548.5 363.0,549.1 365.0,549.6 367.0,550.1 369.0,550.7 371.0,551.2 373.0,551.7 375.0,552.3 377.0,552.8 379.0,553.3 381.0,553.9 383.0,554.4 385.0,554.9 387.0,555.4 389.0,556.0 391.0,556.5 393.0,557.0 395.0,557.5 397.0,558.0 399.0,558.5 401.0,559.1 403.0,559.6 405.0,560.1 407.0,560.6 409.0,561.1 411.0,561.6 413.0,562.1 415.0,562.5 417.0,563.0 419.0,563.5 421.0,564.0 423.0,564.5 425.0,565.0 427.0,565.5 429.0,565.9 431.0,566.4 433.0,566.9 435.0,567.4 437.0,567.8 439.0,568.3 441.0,568.8 443.0,569.2 445.0,569.7 447.0,570.2 449.0,570.7 451.0,571.1 453.0,571.6 455.0,572.1 457.0,572.5 459.0,573.0 461.0,573.5 463.0,573.9 465.0,574.4 467.0,574.9 469.0,575.3 471.0,575.8 473.0,576.3 475.0,576.7 477.0,577.2 479.0,577.7 481.0,578.1 483.0,578.6 485.0,579.1 487.0,579.6 489.0,580.0 491.0,580.5 493.0,581.0" fill="none" stroke="#f2de00" stroke-width="1.5"/><polyline points="138.8,495.0 140.7,495.7 142.7,496.4 144.5,497.1 146.4,497.8 148.2,498.5 149.9,499.2 151.7,499.8 153.4,500.5 155.1,501.2 156.9,501.8 158.6,502.5 160.4,503.1 162.1,503.8 163.9,504.5 165.8,505.2 166.8,505.6" fill="none" stroke="#b0b0b0" stroke-width="1.5"/><polyline points="166.8,505.6 167.6,505.9 169.5,506.6 171.5,507.3 173.6,508.1 175.7,508.8 177.9,509.6 180.1,510.5 182.5,511.3 185.0,512.2 187.5,513.1 190.2,514.0 193.0,515.0 194.6,515.5 196.2,516.1 197.8,516.7 199.5,517.2 201.1,517.8 202.9,518.4 204.6,519.0 206.4,519.7 208.2,520.3 210.1,520.9 211.9,521.6 213.8,522.2 215.7,522.9 217.7,523.6 219.6,524.2 221.6,524.9 223.6,525.6 225.6,526.3 227.7,527.0 229.7,527.7 231.8,528.4 233.8,529.1 235.9,529.8 238.0,530.6 240.1,531.3 242.3,532.0 244.4,532.7 246.5,533.4 248.7,534.2 250.8,534.9 253.0,535.6 255.1,536.3 257.3,537.0 259.4,537.8 261.6,538.5 263.7,539.2 265.9,539.9 268.0,540.6 270.1,541.3 272.3,542.0 274.4,542.7 276.5,543.4 278.6,544.1 280.7,544.7 282.8,545.4 284.9,546.0 286.9,546.7 289.0,547.3 291.0,548.0 293.0,548.6 295.0,549.2 297.0,549.8 299.0,550.4 301.0,551.1 303.0,551.7 305.0,552.3 307.0,552.9 309.0,553.5 311.0,554.1 313.0,554.6 315.0,555.2 317.0,555.8 319.0,556.4 321.0,557.0 323.0,557.6 325.0,558.1 327.0,558.7 329.0,559.3 331.0,559.9 333.0,560.4 335.0,561.0 337.0,561.6 339.0,562.1 341.0,562.7 343.0,563.2 345.0,563.8 347.0,564.4 349.0,564.9 351.0,565.5 353.0,566.0 355.0,566.6 357.0,567.1 359.0,567.7 361.0,568.2 363.0,568.8 365.0,569.3 367.0,569.9 369.0,570.4 371.0,571.0 373.0,571.5 375.0,572.1 377.0,572.6 379.0,573.2 381.0,573.7 383.0,574.3 385.0,574.8 387.0,575.4 389.0,575.9 391.0,576.5 393.0,577.0 395.0,577.5 397.0,578.1 399.0,578.6 401.0,579.2 403.0,579.7 405.0,580.3 407.0,580.8 409.0,581.3 411.0,581.9 413.0,582.4 415.0,583.0 417.0,583.5 419.0,584.0 421.0,584.6 423.0,585.1 425.0,585.6 427.0,586.2 429.0,586.7 431.0,587.2 433.0,587.7 435.0,588.3 437.0,588.8 439.0,589.3 441.0,589.8 443.0,590.4 445.0,590.9 447.0,591.4 449.0,591.9 451.0,592.5 453.0,593.0 455.0,593.5 457.0,594.0 459.0,594.6 461.0,595.1 463.0,595.6 465.0,596.1 467.0,596.7 469.0,597.2 471.0,597.7 473.0,598.2 475.0,598.8 477.0,599.3 479.0,599.8 481.0,600.3 483.0,600.9 485.0,601.4 487.0,601.9 489.0,602.4 491.0,603.0 493.0,603.5" fill="none" stroke="#f2de00" stroke-width="1.5"/><polyline points="93.0,515.8 95.0,516.5 97.0,517.2 99.0,517.9 101.0,518.6 103.0,519.4 105.0,520.1 107.0,520.8 109.0,521.6 111.0,522.3 113.0,523.0 115.0,523.8 117.0,524.5 119.0,525.2 121.0,526.0 123.0,526.7 125.0,527.5 127.0,528.2 129.0,528.9 131.0,529.7 133.0,530.4 135.0,531.2 137.0,531.9 139.0,532.6 141.0,533.4 143.0,534.1 145.0,534.8 147.0,535.6 149.0,536.3 151.0,537.0 153.0,537.8 155.0,538.5 157.0,539.2 159.0,539.9 161.0,540.6 163.0,541.3 165.0,542.1 167.0,542.8 169.0,543.5 171.0,544.2 173.0,544.8 175.0,545.5 177.0,546.2 179.0,546.9 181.0,547.6 183.0,548.2 185.0,548.9 187.0,549.6 189.0,550.2 191.0,550.9 193.0,551.5 195.0,552.1 197.0,552.8 199.0,553.4 201.0,554.0 203.0,554.6 205.0,555.2 207.0,555.8 209.0,556.4 211.0,557.0 213.0,557.6 215.0,558.2 217.0,558.8 219.0,559.4 221.0,559.9 223.0,560.5 225.0,561.1 227.0,561.6 229.0,562.2 231.0,562.7 233.0,563.3 235.0,563.8 237.0,564.4 239.0,564.9 241.0,565.5 243.0,566.0 245.0,566.6 247.0,567.1 249.0,567.7 251.0,568.2 253.0,568.7 255.0,569.3 257.0,569.8 259.0,570.3 261.0,570.9 263.0,571.4 265.0,571.9 267.0,572.5 269.0,573.0 271.0,573.5 273.0,574.1 275.0,574.6 277.0,575.1 279.0,575.7 281.0,576.2 283.0,576.8 285.0,577.3 287.0,577.9 289.0,578.4 291.0,578.9 293.0,579.5 295.0,580.1 297.0,580.6 299.0,581.2 301.0,581.7 303.0,582.3 305.0,582.8 307.0,583.4 309.0,583.9 311.0,584.5 313.0,585.1 315.0,585.6 317.0,586.2 319.0,586.8 321.0,587.3 323.0,587.9 325.0,588.4 327.0,589.0 329.0,589.6 331.0,590.1 333.0,590.7 335.0,591.2 337.0,591.8 339.0,592.3 341.0,592.9 343.0,593.5 345.0,594.0 347.0,594.6 349.0,595.1 351.0,595.7 353.0,596.2 355.0,596.8 357.0,597.3 359.0,597.8 361.0,598.4 363.0,598.9 365.0,599.5 367.0,600.0 369.0,600.5 371.0,601.1 373.0,601.6 375.0,602.1 377.0,602.6 377.4,602.7" fill="none" stroke="#2aee2a" stroke-width="1.5"/><polyline points="377.4,602.7 379.0,603.2 381.0,603.7 383.0,604.2 385.0,604.7 387.0,605.2 389.0,605.7 391.0,606.2 393.0,606.7 395.0,607.2 397.0,607.7 399.0,608.2 401.0,608.6 403.0,609.1 405.0,609.6 407.0,610.1 409.0,610.5 411.0,611.0 413.0,611.5 415.0,611.9 417.0,612.4 419.0,612.8 421.0,613.3 423.0,613.8 425.0,614.2 427.0,614.6 429.0,615.1 431.0,615.5 433.0,616.0 435.0,616.4 437.0,616.9 439.0,617.3 441.0,617.7 443.0,618.2 445.0,618.6 447.0,619.0 449.0,619.5 451.0,619.9 453.0,620.3 455.0,620.7 457.0,621.2 459.0,621.6 461.0,622.0 463.0,622.5 465.0,622.9 467.0,623.3 469.0,623.8 471.0,624.2 473.0,624.6 475.0,625.1 477.0,625.5 479.0,625.9 481.0,626.4 483.0,626.8 485.0,627.2 487.0,627.7 489.0,628.1 491.0,628.6 493.0,629.0" fill="none" stroke="#b0b0b0" stroke-width="1.5"/><polyline points="93.0,531.2 95.0,531.9 97.0,532.6 99.0,533.3 101.0,534.0 103.0,534.8 105.0,535.5 107.0,536.2 109.0,536.9 111.0,537.6 113.0,538.3 115.0,539.0 117.0,539.7 119.0,540.4 121.0,541.1 123.0,541.9 125.0,542.6 127.0,543.3 129.0,544.0 131.0,544.7 133.0,545.4 135.0,546.1 137.0,546.9 139.0,547.6 141.0,548.3 143.0,549.0 145.0,549.7 147.0,550.4 149.0,551.1 151.0,551.8 153.0,552.5 155.0,553.2 157.0,553.9 159.0,554.6 161.0,555.3 163.0,556.0 165.0,556.7 167.0,557.4 169.0,558.1 171.0,558.7 173.0,559.4 175.0,560.1 177.0,560.8 179.0,561.4 181.0,562.1 183.0,562.8 185.0,563.4 187.0,564.1 189.0,564.7 191.0,565.4 193.0,566.0 195.0,566.6 197.0,567.3 199.0,567.9 201.0,568.5 203.0,569.1 205.0,569.8 207.0,570.4 209.0,571.0 211.0,571.6 213.0,572.2 215.0,572.8 217.0,573.4 219.0,574.0 221.0,574.6 223.0,575.2 225.0,575.8 227.0,576.4 229.0,577.0 231.0,577.6 233.0,578.2 235.0,578.8 237.0,579.3 239.0,579.9 241.0,580.5 243.0,581.1 245.0,581.6 247.0,582.2 249.0,582.8 251.0,583.4 253.0,583.9 255.0,584.5 257.0,585.0 259.0,585.6 261.0,586.2 263.0,586.7 265.0,587.3 267.0,587.8 269.0,588.4 271.0,589.0 273.0,589.5" fill="none" stroke="#2aee2a" stroke-width="1.5"/><polyline points="273.0,589.5 275.0,590.1 277.0,590.6 279.0,591.2 281.0,591.7 283.0,592.3 285.0,592.8 287.0,593.4 289.0,593.9 291.0,594.5 293.0,595.0 295.0,595.5 297.0,596.1 299.0,596.6 301.0,597.2 303.0,597.7 305.0,598.3 307.0,598.8 309.0,599.4 311.0,599.9 313.0,600.4 315.0,601.0 317.0,601.5 319.0,602.1 321.0,602.6 323.0,603.1 325.0,603.7 327.0,604.2 329.0,604.7 331.0,605.3 333.0,605.8 335.0,606.3 337.0,606.8 339.0,607.4 341.0,607.9 343.0,608.4 345.0,608.9 347.0,609.4 349.0,609.9 351.0,610.5 353.0,611.0 355.0,611.5 357.0,612.0 359.0,612.5 361.0,613.0 363.0,613.5 365.0,614.0 367.0,614.5 369.0,615.0 371.0,615.4 373.0,615.9 375.0,616.4 377.0,616.9 379.0,617.4 381.0,617.8 383.0,618.3 385.0,618.8 387.0,619.2 389.0,619.7 391.0,620.1 393.0,620.6 395.0,621.0 397.0,621.5 399.0,621.9 401.0,622.4 403.0,622.8 405.0,623.2 407.0,623.6 409.0,624.1 411.0,624.5 413.0,624.9 415.0,625.3 417.0,625.7 419.0,626.1 421.0,626.5 423.0,626.9 425.0,627.3 427.0,627.7 429.0,628.0 431.0,628.4 433.0,628.8 435.0,629.2 437.0,629.6 439.0,629.9 441.0,630.3 443.0,630.7 445.0,631.1 447.0,631.4 449.0,631.8 451.0,632.2 453.0,632.5 455.0,632.9 457.0,633.3 459.0,633.6 461.0,634.0 463.0,634.4 465.0,634.7 467.0,635.1 469.0,635.5 471.0,635.8 473.0,636.2 475.0,636.6 477.0,637.0 479.0,637.3 481.0,637.7 483.0,638.1 485.0,638.5 487.0,638.8 489.0,639.2 491.0,639.6 493.0,640.0" fill="none" stroke="#b0b0b0" stroke-width="1.5"/><polyline points="93.0,564.5 95.0,565.2 97.0,565.9 99.0,566.6 101.0,567.3 103.0,568.0 105.0,568.7 107.0,569.4 109.0,570.1 111.0,570.8 113.0,571.5 115.0,572.2 117.0,572.9 119.0,573.7 121.0,574.4 123.0,575.1 125.0,575.8 127.0,576.5 129.0,577.2 131.0,577.9 133.0,578.7 135.0,579.4 137.0,580.1 139.0,580.8 141.0,581.5 143.0,582.2 145.0,582.9 147.0,583.6 149.0,584.3 151.0,585.0 153.0,585.7 155.0,586.4 157.0,587.1 159.0,587.8 161.0,588.5 163.0,589.2 165.0,589.9 167.0,590.6 169.0,591.2 171.0,591.9 173.0,592.6 175.0,593.2 177.0,593.9 179.0,594.6 181.0,595.2 183.0,595.9 185.0,596.5 187.0,597.1 189.0,597.8 191.0,598.4 193.0,599.0 195.0,599.6 197.0,600.2 199.0,600.8 201.0,601.4 203.0,602.0 205.0,602.6 207.0,603.2 209.0,603.8 211.0,604.4 213.0,604.9 215.0,605.5 217.0,606.1 219.0,606.6 221.0,607.2 223.0,607.7 225.0,608.3 227.0,608.8 229.0,609.4 231.0,609.9 233.0,610.5 235.0,611.0 237.0,611.6 239.0,612.1 241.0,612.6 243.0,613.2 245.0,613.7 247.0,614.2 249.0,614.7 251.0,615.3 251.8,615.5" fill="none" stroke="#2aee2a" stroke-width="1.5"/><polyline points="251.8,615.5 253.0,615.8 255.0,616.3 257.0,616.8 259.0,617.3 261.0,617.8 263.0,618.4 265.0,618.9 267.0,619.4 269.0,619.9 271.0,620.4 273.0,620.9 275.0,621.4 277.0,621.9 279.0,622.4 281.0,622.9 283.0,623.5 285.0,624.0 287.0,624.5 289.0,625.0 291.0,625.5 293.0,626.0 295.0,626.5 297.0,627.0 299.0,627.5 301.0,628.0 303.0,628.5 305.0,629.0 307.0,629.5 309.0,630.0 311.0,630.5 313.0,631.0 315.0,631.5 317.0,632.0 319.0,632.5 321.0,632.9 323.0,633.4 325.0,633.9 327.0,634.4 329.0,634.9 331.0,635.3 333.0,635.8 335.0,636.3 337.0,636.8 339.0,637.2 341.0,637.7 343.0,638.2 345.0,638.7 347.0,639.1 349.0,639.6 351.0,640.1 353.0,640.5 355.0,641.0 357.0,641.5 359.0,642.0 361.0,642.4 363.0,642.9 365.0,643.4 367.0,643.8 369.0,644.3 371.0,644.8 373.0,645.2 375.0,645.7 377.0,646.2 379.0,646.7 381.0,647.1 383.0,647.6 385.0,648.1 387.0,648.6 389.0,649.0 391.0,649.5 393.0,650.0" fill="none" stroke="#b0b0b0" stroke-width="1.5"/><polyline points="93.0,601.2 95.0,601.7 97.0,602.2 99.0,602.6 101.0,603.1 103.0,603.6 105.0,604.0 107.0,604.5 109.0,605.0 111.0,605.4 113.0,605.9 115.0,606.3 117.0,606.8 119.0,607.3 121.0,607.7 123.0,608.2 125.0,608.7 127.0,609.1 129.0,609.6 131.0,610.0 133.0,610.5 135.0,611.0 137.0,611.4 139.0,611.9 141.0,612.3 143.0,612.8 145.0,613.3 147.0,613.7 149.0,614.2 151.0,614.6 153.0,615.1 155.0,615.6 157.0,616.0 159.0,616.5 161.0,617.0 163.0,617.4 165.0,617.9 167.0,618.4 169.0,618.9 171.0,619.3 173.0,619.8 175.0,620.3 177.0,620.7 179.0,621.2 181.0,621.7 183.0,622.2 185.0,622.7 187.0,623.1 189.0,623.6 191.0,624.1 193.0,624.6 195.0,625.1 197.0,625.6 199.0,626.1 201.0,626.6 203.0,627.1 205.0,627.6 207.0,628.0 209.0,628.5 211.0,629.0 213.0,629.5 215.0,630.1 217.0,630.6 219.0,631.1 221.0,631.6 223.0,632.1 225.0,632.6 227.0,633.1 229.0,633.6 231.0,634.1 233.0,634.6 235.0,635.1 237.0,635.6 239.0,636.1 241.0,636.7 243.0,637.2 245.0,637.7 247.0,638.2 249.0,638.7 251.0,639.2 253.0,639.7 255.0,640.3 257.0,640.8 259.0,641.3 261.0,641.8 263.0,642.3 265.0,642.8 267.0,643.3 269.0,643.9 271.0,644.4 273.0,644.9 275.0,645.4 277.0,645.9 279.0,646.4 281.0,646.9 283.0,647.5 285.0,648.0 287.0,648.5 289.0,649.0 291.0,649.5 293.0,650.0" fill="none" stroke="#b0b0b0" stroke-width="1.5"/><polyline points="93.0,626.0 95.0,626.7 97.0,627.4 99.0,628.0 101.0,628.7 103.0,629.4 105.0,630.1 107.0,630.8 109.0,631.4 111.0,632.1 113.0,632.8 115.0,633.5 117.0,634.2 119.0,634.8 121.0,635.5 123.0,636.2 125.0,636.9 127.0,637.6 129.0,638.2 131.0,638.9 133.0,639.6 135.0,640.3 137.0,641.0 139.0,641.6 141.0,642.3 143.0,643.0 145.0,643.7 147.0,644.4 149.0,645.0 151.0,645.7 153.0,646.4 155.0,647.1 157.0,647.8 159.0,648.4 161.0,649.1 163.0,649.8 165.0,650.5 167.0,651.2 169.0,651.8 171.0,652.5 173.0,653.2 175.0,653.9 177.0,654.6 179.0,655.2 181.0,655.9 183.0,656.6 185.0,657.3 187.0,658.0 189.0,658.6 191.0,659.3 193.0,660.0" fill="none" stroke="#f2de00" stroke-width="1.5"/><g transform="translate(144.6,229.6) rotate(29.17)"><rect x="-12.6" y="-3.1" width="25.2" height="6.2" rx="1.5" fill="#9a0606" stroke="#ff4848" stroke-width="1"/></g><g font-family="Liberation Sans, sans-serif" font-size="8.3" fill="#e2e2e2"><text x="145" y="236.5">Rotonda 1</text><text x="145" y="236.5">Proves</text></g><circle cx="476.75" cy="423.75" r="4.6" fill="#ff1a1a" stroke="#ffb0b0" stroke-width="0.8"/><circle cx="384.25" cy="592.75" r="4.6" fill="#ff1a1a" stroke="#ffb0b0" stroke-width="0.8"/><circle cx="301.4" cy="607.7" r="4.6" fill="#ff1a1a" stroke="#ffb0b0" stroke-width="0.8"/><circle cx="246" cy="624.25" r="4.6" fill="#ff1a1a" stroke="#ffb0b0" stroke-width="0.8"/><rect x="385" y="50" width="100" height="75" fill="#151922"/><line x1="399" y1="63.5" x2="402.5" y2="67.0" stroke="#dfe6ee" stroke-width="2.2" stroke-linecap="round"/><circle cx="395.5" cy="60.0" r="5" fill="#1a66d8" stroke="#e8eef5" stroke-width="1.4"/><path d="M392.5 60.0h6M395.5 57.0v6" stroke="#e8f0ff" stroke-width="1.8"/><line x1="421" y1="63.5" x2="424.5" y2="67.0" stroke="#dfe6ee" stroke-width="2.2" stroke-linecap="round"/><circle cx="417.5" cy="60.0" r="5" fill="#1a66d8" stroke="#e8eef5" stroke-width="1.4"/><rect x="414.5" y="59.0" width="6" height="2" fill="#e8f0ff"/><path d="M461.5 62.5 L466 57.5 L476.5 57.5 L476.5 66 L461.5 66 Z" fill="#6a0000" stroke="#ff2a2a" stroke-width="1.2"/><path d="M461.5 83 L464 79.5 L471 79.5 L471 85 L461.5 85 Z" fill="#6a0000" stroke="#ff2a2a" stroke-width="1.1"/><path d="M478 77 L473 87 L461 90.5" fill="none" stroke="#9aa0a8" stroke-width="1"/><circle cx="473" cy="87" r="1.6" fill="#3a8aff"/></svg>
<div id="tool"></div><svg style="position:absolute;left:497px;top:13px" width="16" height="16" viewBox="0 0 16 16"><rect x="1.5" y="2.5" width="13" height="13" rx="1.5" fill="#e8eef4"/><rect x="3" y="3.5" width="10" height="6" fill="#ffffff" stroke="#a8c8e8" stroke-width="0.8"/><rect x="4" y="11" width="8" height="4.5" fill="#b8c4d0"/><rect x="7" y="12" width="3" height="3" fill="#ffffff"/></svg><svg style="position:absolute;left:519px;top:13px" width="16" height="16" viewBox="0 0 16 16"><path d="M4 4 Q8 1.5 12 4 L11.5 15.5 Q8 16.5 4.5 15.5 Z" fill="#25272d" stroke="#33363e" stroke-width="0.8"/></svg><svg style="position:absolute;left:539px;top:13px" width="16" height="16" viewBox="0 0 16 16"><rect x="2.90" y="2.50" width="3.7" height="3.5" rx="1" fill="#c6c6c6"/><rect x="4.00" y="3.70" width="1.5" height="1.1" fill="#1a1a1a"/><rect x="7.10" y="2.50" width="3.7" height="3.5" rx="1" fill="#c6c6c6"/><rect x="8.20" y="3.70" width="1.5" height="1.1" fill="#1a1a1a"/><rect x="11.30" y="2.50" width="3.7" height="3.5" rx="1" fill="#c6c6c6"/><rect x="12.40" y="3.70" width="1.5" height="1.1" fill="#1a1a1a"/><rect x="2.90" y="6.60" width="3.7" height="3.5" rx="1" fill="#c6c6c6"/><rect x="4.00" y="7.80" width="1.5" height="1.1" fill="#1a1a1a"/><rect x="7.10" y="6.60" width="3.7" height="3.5" rx="1" fill="#c6c6c6"/><rect x="8.20" y="7.80" width="1.5" height="1.1" fill="#1a1a1a"/><rect x="11.30" y="6.60" width="3.7" height="3.5" rx="1" fill="#c6c6c6"/><rect x="12.40" y="7.80" width="1.5" height="1.1" fill="#1a1a1a"/><rect x="2.90" y="10.70" width="3.7" height="3.5" rx="1" fill="#c6c6c6"/><rect x="4.00" y="11.90" width="1.5" height="1.1" fill="#1a1a1a"/><rect x="7.10" y="10.70" width="3.7" height="3.5" rx="1" fill="#c6c6c6"/><rect x="8.20" y="11.90" width="1.5" height="1.1" fill="#1a1a1a"/><rect x="11.30" y="10.70" width="3.7" height="3.5" rx="1" fill="#c6c6c6"/><rect x="12.40" y="11.90" width="1.5" height="1.1" fill="#1a1a1a"/></svg><svg style="position:absolute;left:562px;top:13px" width="16" height="16" viewBox="0 0 16 16"><rect x="2.30" y="2.70" width="3.4" height="3.2" rx="0.6" fill="#30ec30" stroke="#b8e8c0" stroke-width="0.7"/><rect x="6.40" y="2.70" width="3.4" height="3.2" rx="0.6" fill="#30ec30" stroke="#b8e8c0" stroke-width="0.7"/><rect x="10.50" y="2.70" width="3.4" height="3.2" rx="0.6" fill="#30ec30" stroke="#b8e8c0" stroke-width="0.7"/><rect x="2.30" y="6.80" width="3.4" height="3.2" rx="0.6" fill="#30ec30" stroke="#b8e8c0" stroke-width="0.7"/><rect x="6.40" y="6.80" width="3.4" height="3.2" rx="0.6" fill="#30ec30" stroke="#b8e8c0" stroke-width="0.7"/><rect x="10.50" y="6.80" width="3.4" height="3.2" rx="0.6" fill="#30ec30" stroke="#b8e8c0" stroke-width="0.7"/><rect x="2.30" y="10.90" width="3.4" height="3.2" rx="0.6" fill="#30ec30" stroke="#b8e8c0" stroke-width="0.7"/><rect x="6.40" y="10.90" width="3.4" height="3.2" rx="0.6" fill="#30ec30" stroke="#b8e8c0" stroke-width="0.7"/><rect x="10.50" y="10.90" width="3.4" height="3.2" rx="0.6" fill="#30ec30" stroke="#b8e8c0" stroke-width="0.7"/></svg><svg style="position:absolute;left:584px;top:13px" width="16" height="16" viewBox="0 0 16 16"><rect x="2" y="9" width="12" height="6.5" fill="#3a414e"/><path d="M8 1.5 L14.5 7.5 L11 7.5 L11 11 L5 11 L5 7.5 L1.5 7.5Z" fill="#5a3c26"/></svg><svg style="position:absolute;left:606px;top:13px" width="16" height="16" viewBox="0 0 16 16"><rect x="2" y="1" width="12" height="6" fill="#3a414e"/><path d="M8 15.5 L14.5 9 L11 9 L11 5 L5 5 L5 9 L1.5 9Z" fill="#5a3c26"/></svg><svg style="position:absolute;left:627px;top:13px" width="16" height="16" viewBox="0 0 16 16"><rect x="0.5" y="1.5" width="4" height="3.5" fill="#3a414e"/><rect x="0.5" y="6.3" width="4" height="3.5" fill="#3a414e"/><rect x="0.5" y="11" width="4" height="3.5" fill="#3a414e"/><path d="M5 6 L8 6 L8 4.5 L10.5 8 L8 11.5 L8 10 L5 10Z" fill="#5a3c26"/><rect x="10.5" y="4" width="4.5" height="8" fill="#3a414e"/></svg><svg style="position:absolute;left:649px;top:13px" width="16" height="16" viewBox="0 0 16 16"><rect x="0.5" y="4" width="4.5" height="8" fill="#3a414e"/><path d="M5 6 L8 6 L8 4.5 L10.5 8 L8 11.5 L8 10 L5 10Z" fill="#5a3c26"/><rect x="10.5" y="1.5" width="4" height="3.5" fill="#3a414e"/><rect x="10.5" y="6.3" width="4" height="3.5" fill="#3a414e"/><rect x="10.5" y="11" width="4" height="3.5" fill="#3a414e"/></svg><svg style="position:absolute;left:669px;top:13px" width="17" height="16" viewBox="0 0 17 16"><path d="M1 9 Q1.5 6 5 6 L8 2.5 Q9 2 9 3.5 L8 6.5 L15.5 6.8 Q16.5 7.5 15.5 8.3 L11 8.6 Q11.5 11.5 9 12.5 L4 12.5 Q1 12 1 9Z" fill="#e8a888"/></svg><svg style="position:absolute;left:692px;top:13px" width="16" height="16" viewBox="0 0 16 16"><circle cx="10.5" cy="3" r="2.2" fill="#e8a070"/><path d="M7.5 6 L14 6 L14.5 15 L7.5 15Z" fill="#dd2020"/><circle cx="5.5" cy="3" r="2.4" fill="#f0b080"/><path d="M1.5 6.5 Q5.5 5 9.5 6.5 L9.5 15 L1.5 15Z" fill="#1a66cc"/><rect x="2" y="15" width="12" height="1" fill="#111"/></svg><svg style="position:absolute;left:713px;top:13px" width="17" height="16" viewBox="0 0 17 16"><rect x="1.5" y="3" width="6" height="11" fill="#8a8a8a"/><rect x="2.5" y="4.5" width="4" height="3" fill="#c8c8c8"/><path d="M7.5 8 Q11 9 9.5 13 Q11.5 14 12.5 10 L13.5 4" fill="none" stroke="#d8b820" stroke-width="1.4"/><path d="M12 5 L15.5 1" stroke="#ffffff" stroke-width="2"/><rect x="0" y="14.5" width="15" height="1.2" fill="#c06010"/></svg><svg style="position:absolute;left:735px;top:13.3px" width="16" height="16" viewBox="0 0 16 16"><rect x="0.5" y="0.5" width="15.5" height="15.5" fill="#0c1020"/><rect x="1" y="1" width="6.4" height="6.4" fill="#a8e4f4"/><path d="M7.4 7.4 L2.2 7.4 L7.4 2.2 Z" fill="#ff8410"/><line x1="2.3" y1="2.3" x2="5.4" y2="5.4" stroke="#ff8410" stroke-width="2.2"/><rect x="8.8" y="1" width="6.4" height="6.4" fill="#a8e4f4"/><path d="M8.8 7.4 L14.0 7.4 L8.8 2.2 Z" fill="#ff8410"/><line x1="13.9" y1="2.3" x2="10.8" y2="5.4" stroke="#ff8410" stroke-width="2.2"/><rect x="1" y="8.8" width="6.4" height="6.4" fill="#a8e4f4"/><path d="M7.4 8.8 L2.2 8.8 L7.4 14.0 Z" fill="#ff8410"/><line x1="2.3" y1="13.9" x2="5.4" y2="10.8" stroke="#ff8410" stroke-width="2.2"/><rect x="8.8" y="8.8" width="6.4" height="6.4" fill="#a8e4f4"/><path d="M8.8 8.8 L14.0 8.8 L8.8 14.0 Z" fill="#ff8410"/><line x1="13.9" y1="13.9" x2="10.8" y2="10.8" stroke="#ff8410" stroke-width="2.2"/></svg><svg style="position:absolute;left:757px;top:13px" width="17" height="17" viewBox="0 0 17 17"><path d="M0.5 0.5 L9 8 L0.5 15.5Z" fill="#ff8c1a"/><path d="M6 11 H15.5 M10.8 6.3 V15.7" stroke="#33dd22" stroke-width="2.6"/></svg><svg style="position:absolute;left:777px;top:13px" width="17" height="17" viewBox="0 0 17 17"><path d="M8 0.5 L16.5 8 L8 15.5Z" fill="#ff8c1a"/><path d="M0.5 11 H10 M5.3 6.3 V15.7" stroke="#33dd22" stroke-width="2.6"/></svg><svg style="position:absolute;left:800px;top:13px" width="17" height="17" viewBox="0 0 17 17"><path d="M3 4 Q7 0.5 11 3 L11 9 L3 9Z" fill="#c0c0c0" stroke="#e8e8e8" stroke-width="0.8"/><rect x="3" y="5" width="7" height="2" fill="#d8c060"/><circle cx="11.5" cy="10.5" r="4.8" fill="#ee1122" stroke="#ffffff" stroke-width="0.4"/><path d="M9.5 8.5 L13.5 12.5 M13.5 8.5 L9.5 12.5" stroke="#ffffff" stroke-width="1.4"/><circle cx="2" cy="14" r="1" fill="#ddd"/></svg><svg style="position:absolute;left:822px;top:13px" width="17" height="17" viewBox="0 0 17 17"><rect x="0.5" y="0.5" width="11" height="13" rx="1" fill="#5e5e5e" stroke="#8a8a8a" stroke-width="0.8"/><path d="M2.5 4 H9 M2.5 7 H8" stroke="#909090" stroke-width="0.8"/><line x1="10" y1="11" x2="14.60" y2="11.00" stroke="#9ed8f4" stroke-width="1.6"/><line x1="10" y1="11" x2="13.25" y2="14.25" stroke="#9ed8f4" stroke-width="1.6"/><line x1="10" y1="11" x2="10.00" y2="15.60" stroke="#9ed8f4" stroke-width="1.6"/><line x1="10" y1="11" x2="6.75" y2="14.25" stroke="#9ed8f4" stroke-width="1.6"/><line x1="10" y1="11" x2="5.40" y2="11.00" stroke="#9ed8f4" stroke-width="1.6"/><line x1="10" y1="11" x2="6.75" y2="7.75" stroke="#9ed8f4" stroke-width="1.6"/><line x1="10" y1="11" x2="10.00" y2="6.40" stroke="#9ed8f4" stroke-width="1.6"/><line x1="10" y1="11" x2="13.25" y2="7.75" stroke="#9ed8f4" stroke-width="1.6"/><circle cx="10" cy="11" r="3.3" fill="#9ed8f4"/><circle cx="10" cy="11" r="1.2" fill="#3a7aa0"/><path d="M12 13 L16 14.5 L12.5 16.5Z" fill="#ff8a10"/></svg><svg style="position:absolute;left:843px;top:13px" width="16" height="16" viewBox="0 0 16 16"><path d="M1 6.5 H6 V4 L9.5 8 L6 12 V9.5 H1Z" fill="#4e3a2a"/><rect x="8.5" y="3" width="6.5" height="11" fill="#163450"/></svg><svg style="position:absolute;left:867px;top:13px" width="14" height="16" viewBox="0 0 14 16"><rect x="1.5" y="1.5" width="1.2" height="13" fill="#888"/><path d="M2.7 2 L7 1 L11.5 3 L10 6 L11.5 8.5 L7 8 L2.7 9Z" fill="#ff2a10"/></svg><svg style="position:absolute;left:887px;top:13px" width="16" height="16" viewBox="0 0 16 16"><rect x="0.5" y="2" width="15" height="12" rx="1" fill="#3a424e" stroke="#465060" stroke-width="0.6"/><rect x="1.5" y="3" width="13" height="5" fill="#45505e"/><path d="M2 11 H14" stroke="#525c68" stroke-width="1.2" stroke-dasharray="1.5 1"/></svg><svg style="position:absolute;left:908px;top:13px" width="16" height="16" viewBox="0 0 16 16"><path d="M1.5 8 L8 3.5 L14.5 8Z" fill="#3a1a2a" stroke="#5a5020" stroke-width="0.8"/><rect x="1" y="8" width="14" height="5" fill="#3e4652"/><path d="M2 13 V15 M4 13 V15 M6 13 V15 M8 13 V15 M10 13 V15 M12 13 V15 M14 13 V15" stroke="#4e5662" stroke-width="1"/></svg>
<div id="table">
<div id="thead">
<div class="sep" style="left:18px"></div>
<div class="sep" style="left:44.5px"></div>
<div class="th" style="left:49.5px">Destino</div>
<div class="sep" style="left:194.8px"></div>
<div class="th" style="left:200px">Horario llegada</div>
<div class="sep" style="left:277.6px"></div>
<div class="th" style="left:283px">Horario salida</div>
<div class="sep" style="left:361.5px"></div>
<div class="sep" style="left:387px"></div>
<div class="sep" style="left:419px"></div>
</div>
<div class="td" style="left:49.5px;top:15.5px">Proves</div>
<div class="td" style="left:200px;top:15.5px">--:--:--</div>
<div class="td" style="left:283px;top:15.5px">12:00:00</div>
<div id="rowsep"></div>
<div id="chk"></div>
<div class="td" style="left:49.5px;top:31.5px">Vía reserva</div>
<div class="td" style="left:200px;top:31.5px">12:00:34</div>
<div class="td" style="left:283px;top:31.5px">12:00:34</div>
<svg class="abs" style="left:25px;top:13.5px" width="14" height="15" viewBox="0 0 14 15"><path d="M2.5 6 L10.5 6 L10.4 11.5 Q9.8 14.3 6.8 14.5 L3.5 14 Q2.4 10.5 2.5 6Z" fill="#e89c84" stroke="#1a1a1a" stroke-width="0.6"/><path d="M8.8 6 L11.3 6 L10.8 10 Q9.8 7.8 8.8 6Z" fill="#d8841c"/><path d="M1.3 4.8 Q1.5 1.5 7 1.2 Q12.4 1.2 12.6 4.5 L11.4 6.3 L2.2 6.3 Z" fill="#1c1c1c"/></svg>
<svg class="abs" style="left:25px;top:31px" width="14" height="11" viewBox="0 0 14 11"><rect x="6.5" y="1.5" width="5" height="8" fill="#2090d0"/><path d="M1 4 H4.5 V2 L8 5.5 L4.5 9 V7 H1Z" fill="#ff8a10"/></svg>
</div>
<div id="bottom"></div>
<div id="btn">Aceptar</div>
</body></html>
